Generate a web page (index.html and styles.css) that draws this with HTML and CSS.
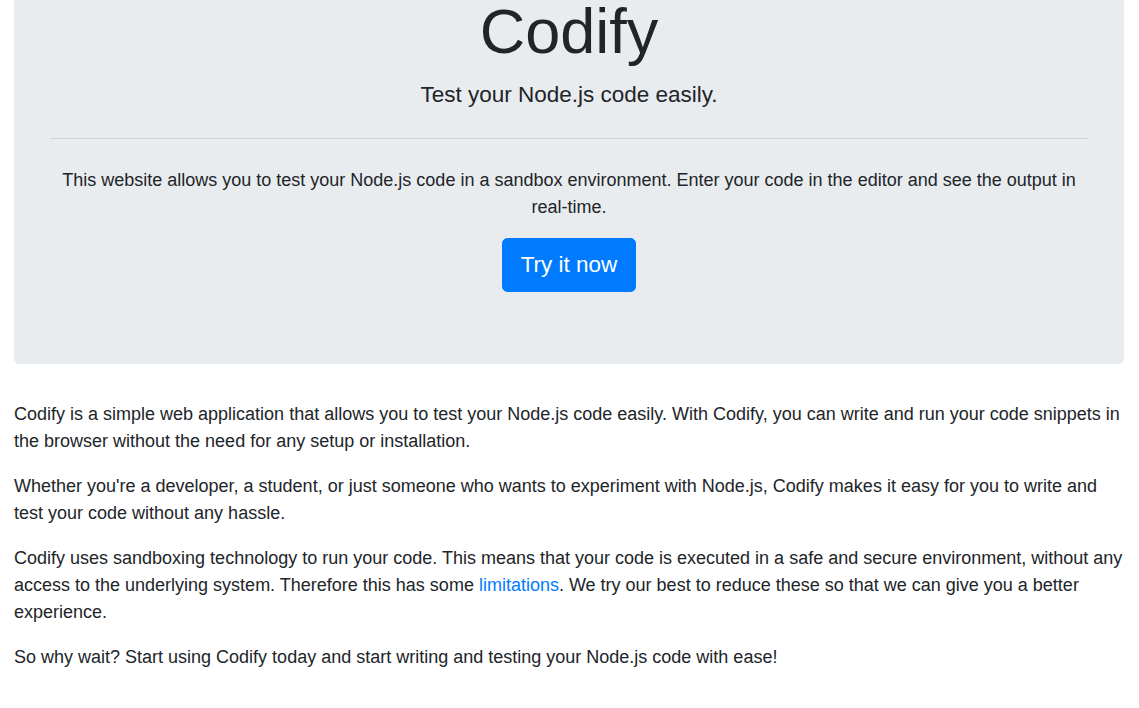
FILE: index.html
```html
<!DOCTYPE html>
<html lang="en">
<head>
<meta charset="utf-8">
<title>Codify</title>
<link rel="stylesheet" href="styles.css">
</head>
<body>
<div class="container">
  <div class="jumbotron">
    <h1 class="display">Codify</h1>
    <p class="lead">Test your Node.js code easily.</p>
    <hr class="divider">
    <p class="intro">This website allows you to test your Node.js code in a sandbox environment. Enter your code in the editor and see the output in real-time.</p>
    <a class="btn" href="#">Try it now</a>
  </div>
  <p class="text">Codify is a simple web application that allows you to test your Node.js code easily. With Codify, you can write and run your code snippets in the browser without the need for any setup or installation.</p>
  <p class="text">Whether you're a developer, a student, or just someone who wants to experiment with Node.js, Codify makes it easy for you to write and test your code without any hassle.</p>
  <p class="text">Codify uses sandboxing technology to run your code. This means that your code is executed in a safe and secure environment, without any access to the underlying system. Therefore this has some <a class="link" href="#">limitations</a>. We try our best to reduce these so that we can give you a better experience.</p>
  <p class="text">So why wait? Start using Codify today and start writing and testing your Node.js code with ease!</p>
</div>
</body>
</html>
```

FILE: styles.css
```css
html, body {
  margin: 0;
  padding: 0;
}
body {
  font-family: "Liberation Sans", Arial, sans-serif;
  font-size: 18px;
  line-height: 1.5;
  color: #212529;
  background: #fff;
}
.container {
  padding: 0 15px 0 14px;
}
.jumbotron {
  background: #e9ecef;
  border-radius: 0 0 5.4px 5.4px;
  padding: 0 36px 72px;
  margin-bottom: 37px;
  text-align: center;
}
.display {
  font-size: 63px;
  font-weight: 300;
  line-height: 62px;
  margin: 0 0 16px;
}
.lead {
  font-size: 22.5px;
  font-weight: 300;
  line-height: 1.5;
  margin: 0;
}
.divider {
  border: 0;
  border-top: 1px solid rgba(0, 0, 0, 0.1);
  margin: 26px 0 28px;
  height: 0;
}
.intro {
  margin: 0 0 17px;
}
.btn {
  display: inline-block;
  background: #007bff;
  color: #fff;
  text-decoration: none;
  font-size: 22.5px;
  line-height: 1.5;
  padding: 9px 18px;
  border: 1px solid #007bff;
  border-radius: 5.4px;
  vertical-align: top;
}
.text {
  margin: 0 0 18px;
}
.link {
  color: #007bff;
  text-decoration: none;
}
```
